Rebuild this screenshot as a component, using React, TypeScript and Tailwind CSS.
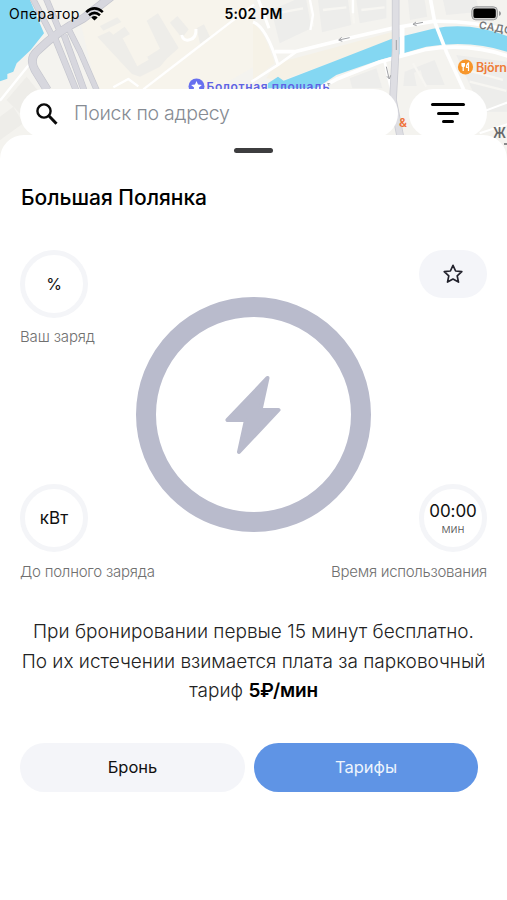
import { type ReactNode } from 'react';

function MapBackdrop() {
  return (
    <svg
      className="absolute inset-x-0 top-0"
      width="507"
      height="160"
      viewBox="0 0 507 160"
      fontFamily="Inter, sans-serif"
    >
      <rect width="507" height="160" fill="#f4f3ef" />

      {/* West bank */}
      <g transform="scale(.3333)" fill="none" strokeLinejoin="round">
        <path d="M240 60L330 0H762V200L640 270H290z" fill="#f7f4ec" />
        <path d="M0 0H90L132 100L92 150L50 190L40 215L22 222V236L0 244z" fill="#84d7f2" />
        <g fill="#eeede9">
          <path d="M292 110l36-16 12 10 34-24 66 92 40-26-40-84 34-22 62 104-36 32-20 24-60 30-24-8z" />
          <path d="M510 68l22-20 34 40-20 26zM590 85l22-12 18 38-30 20z" />
          <path d="M300 78l52-26 12 14-54 26zM20 300l60-70 40 50-60 60zM0 350l40-30 30 50-70 50z" />
        </g>
        <path d="M368 115l44 84 34-20-40-86z" fill="#f7f4ec" />
        <path d="M545 105q5 20 25 14t18-32" stroke="#fff" strokeWidth="9" />
        <g stroke="#fff" strokeWidth="7">
          <path d="M0 302L82 200L150 120" />
          <path d="M430 268L560 168L690 68L762 14" />
          <path d="M340 262l45-25 30 22" />
        </g>
        <g stroke="#c5c6ce" strokeWidth="26">
          <path d="M98-5L155 105M138-5L180 95" strokeWidth="19" />
          <path d="M340-15L250 55Q170 95 115 150Q85 175 105 210L142 270" />
          <path d="M165 115L228 270M192 105L252 270" strokeWidth="20" />
          <path d="M205 85L240 155L290 270" strokeWidth="18" />
        </g>
        <g stroke="#d7d7de" strokeWidth="22">
          <path d="M98-5L155 105M138-5L180 95" strokeWidth="15" />
          <path d="M340-15L250 55Q170 95 115 150Q85 175 105 210L142 270" />
          <path d="M165 115L228 270M192 105L252 270" strokeWidth="16" />
          <path d="M205 85L240 155L290 270" strokeWidth="14" />
        </g>
      </g>

      {/* East side with the canal */}
      <g transform="translate(253) scale(.3333)" fill="none" strokeLinejoin="round">
        <path d="M0 70Q35 90 65 190L0 240z" fill="#f6f2e7" />
        <path d="M70 190L420 95V120L240 185L90 240L40 235z" fill="#f5f1e6" />
        <g fill="#ededeb">
          <path d="M55 30l70-30h35l15 85-95 45z" />
          <path d="M195 0h90l10 75-88 22z" />
          <path d="M310 0h90v55l-80 15z" />
          <path d="M465 0h50l8 50-52 10z" />
          <path d="M570 0h100l10 35-100 10z" />
          <path d="M290 235l80-30 18 60h-90z" />
          <path d="M455 215l90-35 30 75h-60l-12-45-20 8 8 40h-40z" />
          <path d="M610 165l152 20v150H690l-30-60z" />
        </g>
        <path
          d="M170 0l10 80M295 0l8 70M640 210l110 30M650 245l110 28M480 190l40 70M70 40l80-15M210 30l70-8M325 30l70-8"
          stroke="#f7f6f2"
          strokeWidth="7"
        />
        <path
          d="M45 250L75 230L92 242L240 185L415 117L540 86Q650 64 762 108V155Q650 118 520 140L380 180L250 225L190 265H45z"
          fill="#84d7f2"
        />
        <g stroke="#fff" strokeWidth="11">
          <path d="M0 66Q40 80 75 195M15-5L48 85" strokeWidth="9" />
          <path d="M65 155H125L300 112L420 84L540 64Q660 62 770 92" />
          <path d="M-5 246L75 195L130 155" strokeWidth="8" />
          <path d="M195 268L250 238L380 186L520 148Q650 128 770 170" />
          <path d="M532-5L545 65L580 155L635 275" />
          <path d="M447 75V165" strokeWidth="15" />
          <path d="M395 185L415 270" strokeWidth="8" />
          <path d="M170-5L180 45L172 90M300-5V40" strokeWidth="7" />
          <path d="M690 335L770 305M680 400l90-30" strokeWidth="6" />
        </g>
        <g>
          <path d="M428-5V150L420 300L442 410" stroke="#cbccd3" strokeWidth="23" />
          <path d="M428-5V150L420 300L442 410" stroke="#dedee3" strokeWidth="18" />
        </g>
        <path
          d="M258 120l32-7M266 112l-9 8 11 4M480 73l30-6M489 66l-9 7 11 4M400 200l8 35M402 229l7 8 4-11M430 120v30M228 258l-4-8 8 2"
          stroke="#a0a1a4"
          strokeWidth="3"
        />
      </g>

      {/* Places */}
      <circle cx="196.500" cy="86.500" r="8" fill="#6870ef" />
      <path d="M196.500 81l1.500 3.600 3.900.3-3 2.500.9 3.800-3.300-2-3.300 2 .9-3.800-3-2.500 3.900-.3z" fill="#fff" />
      <text x="206.500" y="91" fontSize="12" fontWeight="600" fill="#6063e4" textLength="123">
        Болотная площадь
      </text>
      <circle cx="465.500" cy="67" r="7.600" fill="#f7962b" />
      <path
        d="M462 63v2.500a1.200 1.200 0 0 0 2.400 0V63M463.200 63v8M468.500 71v-8q-2 1-2 4.500h2"
        fill="none"
        stroke="#fff"
        strokeWidth="1.200"
      />
      <text x="476" y="72" fontSize="12.500" fontWeight="600" fill="#ef7d38" textLength="31">
        Björn
      </text>
      <text x="399" y="127" fontSize="12" fontWeight="600" fill="#f07038">&amp;</text>
      <text
        x="478.500"
        y="28.500"
        fontSize="10.500"
        fontWeight="600"
        letterSpacing=".4"
        fill="#77787a"
        transform="rotate(10 478.500 28.500)"
      >
        САДО
      </text>
      <text x="493" y="138" fontSize="15" fontWeight="600" fill="#66676a" textLength="13" lengthAdjust="spacingAndGlyphs">
        Ж
      </text>
      <path d="M504 144h3" stroke="#66676a" strokeWidth="1.500" />
    </svg>
  );
}

function StatusBar() {
  return (
    <div className="relative flex h-7 items-center justify-between pr-[5px] pl-[9px] text-black">
      <div className="flex w-[190px] items-center gap-[5px]">
        <span className="text-[14px] leading-none tracking-[0.5px]">Оператор</span>
        <svg width="19" height="14" viewBox="0 0 19 14" fill="none" stroke="currentColor">
          <path d="M1.200 5.100Q9.500-2.300 17.800 5.100" strokeWidth="2.600" />
          <path d="M4 8.300Q9.500 3.400 15 8.300" strokeWidth="2.500" />
          <path d="M9.500 13.500L6.300 10.400Q9.500 7.800 12.700 10.400z" fill="currentColor" stroke="none" />
        </svg>
      </div>
      <span className="relative right-[2px] text-[14px] leading-none font-semibold tracking-[0.2px]">5:02 PM</span>
      <div className="flex w-[190px] justify-end">
        <svg className="relative -top-px" width="31" height="15" viewBox="0 0 31 15">
          <rect x=".8" y=".8" width="25.600" height="13" rx="4" fill="#d4d4d2" stroke="#969799" strokeWidth="1" />
          <rect x="2.400" y="2.500" width="22.400" height="9.600" rx="2.200" />
          <path d="M28 5q2 .6 2 2.500T28 10z" fill="#969799" />
        </svg>
      </div>
    </div>
  );
}

function SearchRow() {
  return (
    <div className="relative mt-[61px] flex gap-[11px] pl-5">
      <div className="flex h-[49px] w-[378px] items-center rounded-full bg-white pl-4">
        <svg width="22" height="22" viewBox="0 0 22 22" fill="none" stroke="#0a0a0a">
          <circle cx="8" cy="8" r="6.600" strokeWidth="2.400" />
          <path d="M12.800 12.800L20.500 20.700" strokeWidth="3" />
        </svg>
        <span className="ml-4 text-[19.500px] leading-none font-light tracking-[-0.250px] text-[#868b93]">
          Поиск по адресу
        </span>
      </div>
      <div className="flex h-[49px] w-[78px] flex-col items-center gap-[5.500px] rounded-full bg-white pt-[14px]">
        <div className="h-[3px] w-[34px] rounded-full bg-black" />
        <div className="h-[3px] w-[22px] rounded-full bg-black" />
        <div className="h-[3px] w-3 rounded-full bg-black" />
      </div>
    </div>
  );
}

function Ring({ children }: { children: ReactNode }) {
  return (
    <div className="flex size-[68px] flex-col items-center justify-center rounded-full border-[5px] border-[#f4f5f8] text-[17px] text-[#111]">
      {children}
    </div>
  );
}

function ChargeDial() {
  return (
    <div className="absolute top-[47px] left-[136px] flex size-[235px] items-center justify-center rounded-full border-[20px] border-[#b9bbcc]">
      <svg className="relative right-px" width="56" height="80" viewBox="0 0 56 80">
        <path
          d="M42.500 3L2.500 45H21L14 77L53.500 35H35.500z"
          fill="#b9bbcc"
          stroke="#b9bbcc"
          strokeWidth="4"
          strokeLinejoin="round"
        />
      </svg>
    </div>
  );
}

export default function App() {
  return (
    <div className="relative flex h-[900px] w-[507px] flex-col overflow-hidden bg-white font-['Inter',sans-serif]">
      <MapBackdrop />
      <StatusBar />
      <SearchRow />

      {/* Station sheet */}
      <div className="relative -mt-[3px] flex-1 rounded-t-[24px] bg-white pt-[12.500px]">
        <div className="mx-auto h-[5px] w-[39px] rounded-full bg-[#3d3d3f]" />
        <h1 className="mt-[31.500px] pl-[21px] text-[21px] leading-[28px] font-medium text-black">Большая Полянка</h1>

        <div className="relative mt-[38px] flex h-[332px] flex-col justify-between pr-5 pl-5">
          <ChargeDial />
          <div className="flex items-start justify-between">
            <div>
              <Ring>
                <span className="text-[16px]">%</span>
              </Ring>
              <p className="mt-[9px] text-[15px] leading-5 font-light tracking-[-0.150px] text-[#707070]">Ваш заряд</p>
            </div>
            <button className="flex h-[48px] w-[68px] items-center justify-center rounded-full bg-[#f4f5f9]">
              <svg
                width="22"
                height="22"
                viewBox="0 0 22 22"
                fill="none"
                stroke="#22222c"
                strokeWidth="1.700"
                strokeLinejoin="round"
              >
                <path d="M11 2.300l2.600 5.700 6.200.7-4.600 4.200 1.300 6.200L11 16l-5.500 3.100 1.300-6.200-4.600-4.200 6.200-.7z" />
              </svg>
            </button>
          </div>
          <div className="flex items-end justify-between">
            <div>
              <Ring>
                <span className="relative top-px">кВт</span>
              </Ring>
              <p className="mt-[10px] text-[15px] leading-5 font-light tracking-[-0.230px] text-[#707070]">
                До полного заряда
              </p>
            </div>
            <div className="flex flex-col items-end">
              <Ring>
                <span className="mt-px leading-5 tracking-[-0.100px]">00:00</span>
                <span className="text-[12px] leading-4 font-light text-[#555]">мин</span>
              </Ring>
              <p className="mt-[10px] text-[15px] leading-5 font-light tracking-[-0.280px] text-[#707070]">
                Время использования
              </p>
            </div>
          </div>
        </div>

        <p className="mt-[35px] text-center text-[19px] leading-[29.500px] font-light whitespace-nowrap text-[#222]">
          При бронировании первые 15 минут бесплатно.
          <br />
          По их истечении взимается плата за парковочный
          <br />
          тариф <span className="font-semibold tracking-[-0.200px] text-black">5₽/мин</span>
        </p>

        <div className="mt-[37px] flex gap-[9px] pl-5 text-[16.500px]">
          <button className="h-[49px] w-[225px] rounded-full bg-[#f4f5f9] text-[#111]">Бронь</button>
          <button className="h-[49px] w-[224px] rounded-full bg-[#5f94e5] text-[#eef4fd]">Тарифы</button>
        </div>
      </div>
    </div>
  );
}
